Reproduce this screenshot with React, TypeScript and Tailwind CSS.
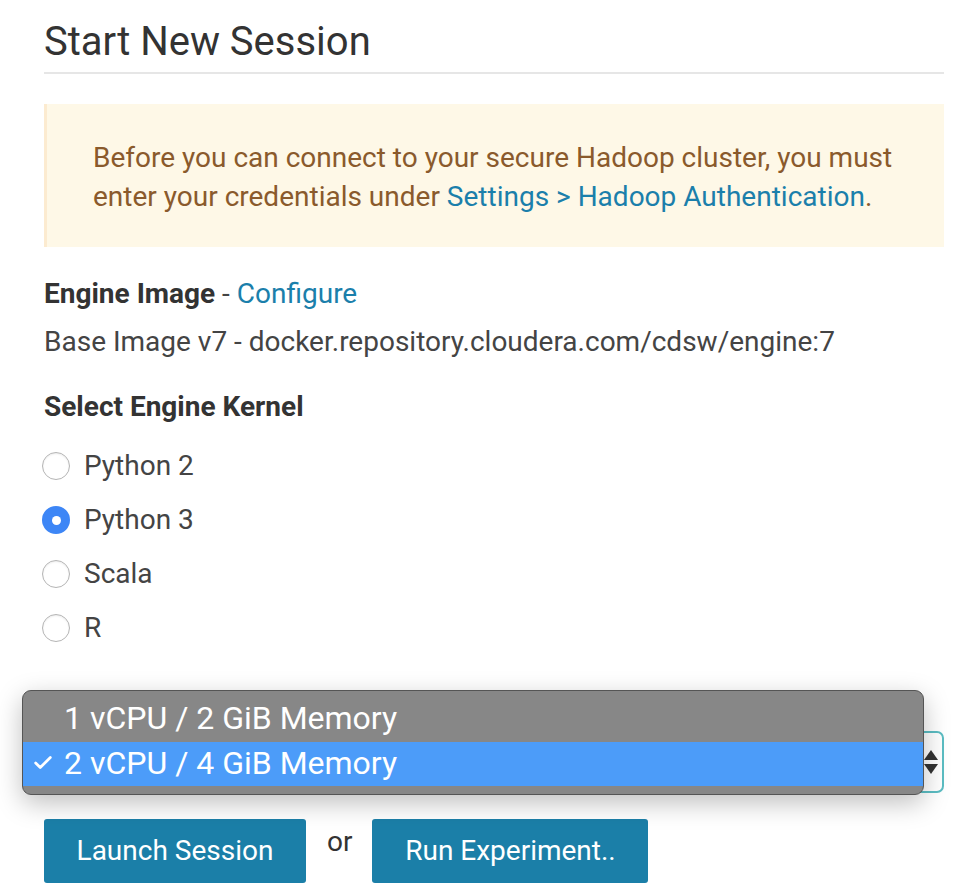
import { Check } from "lucide-react";

function Radio({ label, checked }: { label: string; checked?: boolean }) {
  return (
    <label className="flex items-center h-[54px]">
      {checked ? (
        <span className="w-[28px] h-[28px] rounded-full bg-[#3d86f6] flex items-center justify-center">
          <span className="w-[9px] h-[9px] rounded-full bg-white" />
        </span>
      ) : (
        <span className="w-[28px] h-[28px] rounded-full border border-[#b5b5b5] bg-white shadow-[inset_0_1px_2px_rgba(0,0,0,0.08)]" />
      )}
      <span className="ml-[14px]">{label}</span>
    </label>
  );
}

export default function App() {
  return (
    <div
      className="w-[960px] h-[890px] bg-white overflow-hidden text-[#444]"
      style={{ fontFamily: "Roboto, 'Liberation Sans', sans-serif" }}
    >
      <div className="ml-[44px] mr-[16px] pt-[20px]">
        <h1 className="text-[40px] leading-[44px] text-[#333] pb-[8px] border-b-2 border-[#e6e6e6]">
          Start New Session
        </h1>

        <div className="mt-[30px] bg-[#fef8e7] border-l-[3px] border-[#fcebd0] pl-[46px] pr-[20px] pt-[34px] pb-[31px] text-[28px] leading-[39px] text-[#8a5a2c]">
          Before you can connect to your secure Hadoop cluster, you must
          <br />
          enter your credentials under{" "}
          <span className="text-[#1b7fab]">Settings &gt; Hadoop Authentication</span>.
        </div>

        <div className="mt-[23px] text-[28px] leading-[48px]">
          <div>
            <span className="font-bold text-[#333]">Engine Image</span> -{" "}
            <span className="text-[#1b7fab]">Configure</span>
          </div>
          <div>Base Image v7 - docker.repository.cloudera.com/cdsw/engine:7</div>
        </div>

        <div className="mt-[17px] text-[28px] leading-[48px] font-bold text-[#333]">
          Select Engine Kernel
        </div>

        <div className="mt-[8px] text-[28px] -ml-[2px]">
          <Radio label="Python 2" />
          <Radio label="Python 3" checked />
          <Radio label="Scala" />
          <Radio label="R" />
        </div>

        <div className="relative mt-[76px] h-[62px]">
          <div className="h-[62px] border-2 border-[#5bbdc3] rounded-[7px] bg-white flex items-center justify-end pr-[3px]">
            <svg width="16" height="30" viewBox="0 0 16 30">
              <path d="M8 3 L15 13 L1 13 Z" fill="#333" />
              <path d="M1 17 L15 17 L8 27 Z" fill="#333" />
            </svg>
          </div>

          <div className="absolute left-[-22px] top-[-41px] w-[902px] h-[105px] rounded-[9px] border border-[#555] bg-[#878787] shadow-[0_8px_26px_rgba(0,0,0,0.25)] pt-[6px] text-white text-[32px] overflow-hidden">
            <div className="h-[45px] flex items-center pl-[41px] pb-[4px]">1 vCPU / 2 GiB Memory</div>
            <div className="h-[44px] flex items-center bg-[#4c9cf9] pb-[3px]">
              <Check size={22} strokeWidth={3} className="ml-[9px] mr-[10px]" />
              2 vCPU / 4 GiB Memory
            </div>
          </div>
        </div>

        <div className="mt-[26px] flex items-start text-[28px]">
          <button className="w-[262px] h-[64px] rounded-[3px] bg-[#1b7fa8] text-white">
            Launch Session
          </button>
          <span className="ml-[21px] mr-[20px] mt-[2px] text-[#333]">or</span>
          <button className="w-[276px] h-[64px] rounded-[3px] bg-[#1b7fa8] text-white">
            Run Experiment..
          </button>
        </div>
      </div>
    </div>
  );
}
